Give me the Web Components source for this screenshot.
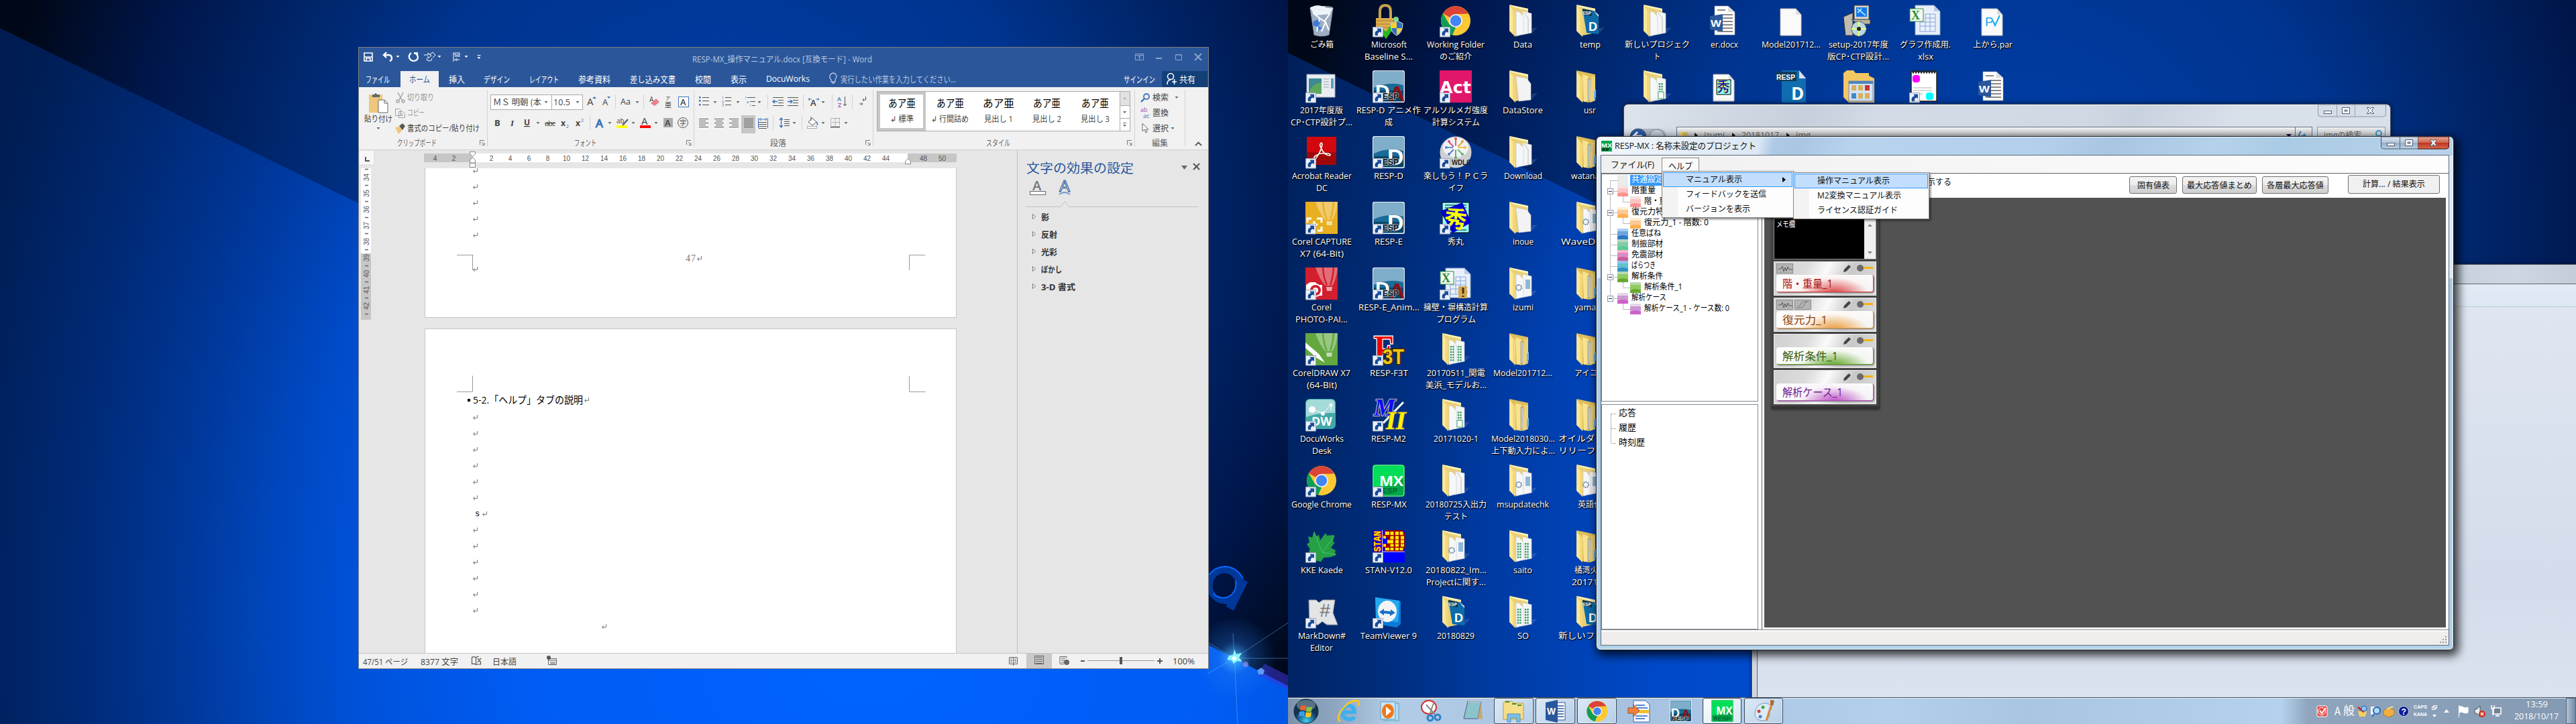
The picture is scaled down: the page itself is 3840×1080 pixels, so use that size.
<!DOCTYPE html>
<html lang="ja">
<head>
<meta charset="utf-8">
<title>Desktop</title>
<style>
html,body{margin:0;padding:0;width:3840px;height:1080px;overflow:hidden;background:#001a50}
body{font-family:"Open Sans","Noto Sans CJK JP",sans-serif;font-size:12px}
</style>
</head>
<body>
<dual-desktop></dual-desktop>
<script>
/* ---------- helpers ---------- */
const BASE = `*{box-sizing:border-box}svg{display:block;flex:none;overflow:visible}.row{display:flex;align-items:center;flex:none}.row>.i{flex:none;display:flex;align-items:center}`;
const S = (x,y,w,h,c,st='') => `<svg width="${w}" height="${h}" viewBox="${x} ${y} ${w} ${h}" style="${st}">${c}</svg>`;
const T = (w,t,st='') => `<fit-text w="${w}" style="${st}">${t}</fit-text>`;
const R = (start,h,items,st='') => { let c=start; return `<div class="row" style="height:${h}px;${st}">`+items.map(([x,w,html,s=''])=>{const m=x-c;c=x+w;return `<div class="i" style="margin-left:${m}px;width:${w}px;${s}">${html}</div>`}).join('')+`</div>`; };
const define = (name, css, html) => customElements.define(name, class extends HTMLElement{
  constructor(){ super(); this.attachShadow({mode:'open'}); }
  connectedCallback(){ if(this.done) return; this.done=true; this.shadowRoot.innerHTML=`<style>${BASE}${css}</style>`+(typeof html==='function'?html(this):html); }
});

/* one line of text condensed or widened to a given width */
customElements.define('fit-text', class extends HTMLElement{
  constructor(){ super(); this.attachShadow({mode:'open'}).innerHTML='<style>:host{display:inline-block;white-space:nowrap;flex:none}span{display:inline-block;transform-origin:0 50%}</style><span><slot></slot></span>'; }
  connectedCallback(){ const w=+this.getAttribute('w'), s=this.shadowRoot.querySelector('span'); this.style.width='auto'; const n=s.getBoundingClientRect().width; this.style.width=w+'px'; if(n>0) s.style.transform=`translateY(var(--dy,-1px)) scaleX(${w/n})`; }
});

/* ---------- wallpaper ---------- */
define('wall-paper', `:host{display:block;width:1920px;height:1080px;overflow:hidden}`, el => {
  const right = el.hasAttribute('plain');
  const edge = right ? 'M0 79L458 303L1840 1000L1920 1040V1080H0Z' : 'M0 42L532 302L1840 982L1920 1023V1080H0Z';
  const stops = (right ? [[0,'#0050e0'],[.45,'#004acc'],[.67,'#0044bc'],[.82,'#003796'],[1,'#002c7c']] : [[0,'#0064ff'],[.35,'#005cf4'],[.6,'#004ccc'],[.78,'#00389e'],[1,'#002468']]).map(([o,c])=>`<stop offset="${o}" stop-color="${c}"/>`).join('');
  return S(0,0,1920,1080,`<defs>
  <radialGradient id="u" gradientUnits="userSpaceOnUse" cx="1080" cy="330" r="1080"><stop offset="0" stop-color="#0040aa"/><stop offset=".45" stop-color="#003490"/><stop offset=".62" stop-color="#00276e"/><stop offset=".82" stop-color="#00164a"/><stop offset="1" stop-color="#000818"/></radialGradient>
  <radialGradient id="l" gradientUnits="userSpaceOnUse" cx="1300" cy="${right?850:930}" r="1500">${stops}</radialGradient>
  <linearGradient id="d" x1="0" x2="1"><stop offset="0" stop-color="#00143a" stop-opacity=".5"/><stop offset=".28" stop-color="#001e50" stop-opacity="0"/></linearGradient>
  <radialGradient id="g"><stop offset="0" stop-color="#7fe8ff"/><stop offset=".12" stop-color="#48b8ff" stop-opacity=".7"/><stop offset=".4" stop-color="#2a80f0" stop-opacity=".3"/><stop offset="1" stop-color="#2a80f0" stop-opacity="0"/></radialGradient></defs>
  <rect width="1920" height="1080" fill="url(#u)"/><path d="${edge}" fill="url(#l)"/><path d="${edge}" fill="url(#d)"/>`+(right?'':`
  <path fill-rule="evenodd" fill="#00389a" d="M1825 845c13 0 24 8 29 20l6 3-21 43-11-6 1-4a28 28 0 1 1-4-56zM1825 855a17.500 18.500 0 1 0 .1 0z"/>
  <path d="M1802 858q8-12 24-13 18 1 27 18M1842 866q2 12-5 20-10 9-22 4-5-2-6-5" fill="none" stroke="#0a66ff" stroke-width="2"/>
  <path d="M1885 990l40 20v20l-51-23z" fill="#3a34d8" opacity=".55"/>
  <circle cx="1840" cy="982" r="62" fill="url(#g)"/><path d="M1770 940L1840 982L1920 929M1838 945L1840 982L1845 1080M1840 982L1800 1005M1840 982h80" fill="none" stroke="#6fc4ff" stroke-opacity=".45"/>
  <path d="M1832 978l6-1 2-8 3 7 8-2-4 7 5 6-8-1-5 4-3-5-7-1z" fill="#8ff6ff"/><circle cx="1840" cy="982" r="3" fill="#fff"/><circle cx="1857" cy="991" r="4" fill="#8f8ff0" opacity=".7"/><path d="M1874 1000l6-4 5 4-2 6h-7z" fill="#5d9cf5"/>`));
});

/* ---------- desktop icon artwork, 48 x 48 ---------- */
const LINK = `<path d="M.5 33.500h15v14.500H.5z" fill="#e9f0fa" stroke="#9aa4b4"/><path d="M4 46q-2-6 4-8l-1.500-2.500H13v6.500l-2-1.500q-4 1-3 5.500z" fill="#1c4c98"/>`;
const FB = `<path d="M36 44l10-10-8 1z" fill="#fff" opacity=".12"/><path d="M4 0l28 6v36l-19 4z" fill="#e9cf78"/><path d="M4 0l28 6v3L8 3z" fill="#fff3b8"/>`;
const FF = `<path d="M4 1l9 11v36L4 39z" fill="#fbe795"/><path d="M4 1l9 11v36L9 43V9z" fill="#f0d273" opacity=".75"/>`;
const PG = (x,c='#f6f7f9') => `<path d="M${x} 10l5 1 6 7v26l-11 3z" fill="${c}" stroke="#c8cbd2" stroke-width=".6"/>`;
const BIG = `<path d="M24 10l13 3v29l-15 3z" fill="#f4f5f7" stroke="#ccc" stroke-width=".6"/>`;
const GRN = x => `<path d="M${x} 19v24M${x+3.500} 19v23" stroke="#3f9f67" stroke-width="2.400" stroke-dasharray="2.500 1.500"/>`;
const A = {
 f2: FB+BIG+PG(14)+`<path d="M26 12l6 8v22" fill="none" stroke="#bbb"/>`+FF,
 f1: FB+`<path d="M14 9l16 3 6 8v24l-18 2z" fill="#f3f3f4" stroke="#ccc" stroke-width=".6"/>`+FF,
 fd: `<path d="M4 0l28 6v36l-10 6-9-2z" fill="#dfbd58"/><path d="M13 6l9 3v37l-7 1z" fill="#f9e28f"/><path d="M21 12l5 2v30l-5 2z" fill="#c7c7b8" stroke="#777" stroke-width=".5"/><path d="M26 8l6 2v35l-8 3z" fill="#ecd27a"/><path d="M33 28v12l-3 5V31z" fill="#6fb5e8"/>`+FF,
 fg: FB+BIG+PG(14)+GRN(17)+GRN(28)+FF,
 fg1: FB+BIG+PG(14)+GRN(28)+`<path d="M26 32h8v10h-8z" fill="#fff" stroke="#3f9f67"/>`+FF,
 fr: FB+`<path d="M13 6l20 4 4 6v28l-18-2z" fill="#0d6ba8"/><path d="M13 6l14 3v8l-14-2z" fill="#123a52"/><path d="M30 10l7 8v-3z" fill="#eee"/><text x="22" y="39" font-size="18" font-weight="700" fill="#fff" font-family="Liberation Sans">D</text><text x="13" y="15" font-size="6.500" font-weight="700" fill="#fff" font-family="Liberation Sans">ESP</text>`+FF,
 fw: FB+BIG+PG(14)+`<circle cx="18" cy="30" r="4" fill="none" stroke="#6a88a8" stroke-width="2" stroke-dasharray="2 1"/><path d="M28 18h7v14h-7z" fill="#8fb8d8"/>`+FF,
 bin: `<path d="M7 5h34l-6 40q-11 4-22 0z" fill="#b9cbe0" opacity=".85"/><path d="M7 5q8-6 17-3t17 3l-5 9-22 2z" fill="#eef4fa"/><path d="M11 12l10 8-4 20M37 12l-8 12 6 14M21 20l9 6-6 14" stroke="#fff" fill="none" stroke-width="2"/><path d="M12 25l6-3 4 6-4 5-7-2zM19 31l6 4-6 4z" fill="#3f78d8"/><path d="M7 5l6 40q11 4 22 0l6-40" fill="none" stroke="#8798ae"/><ellipse cx="24" cy="5" rx="17" ry="2.500" fill="none" stroke="#e8eef6"/>`,
 lock: `<path d="M11 22V10q0-9 8-9t8 9v12" fill="none" stroke="#c9a24a" stroke-width="4"/><path d="M5 20h26v20H5z" fill="#dcae4e"/><path d="M5 24h26M5 29h26M5 34h26" stroke="#a9782a"/><circle cx="35" cy="22" r="4" fill="#7bdc86"/><path d="M14 38l6 8 9-13" stroke="#25b91f" stroke-width="6" fill="none"/><path d="M36 24l9 4q0 14-9 18-9-4-9-18z" fill="#2d6fc4" stroke="#d8e4f0"/><path d="M36 25v10h-8q-1-4 0-7zM36 35h8q-2 7-8 10z" fill="#f7cf33"/>`,
 chrome: `<circle cx="24" cy="24" r="22" fill="#fcc934"/><path d="M24 24L5 13A22 22 0 0 1 43 13.500L24 14z" fill="#db4437"/><path d="M5 13L14.500 29.500 24 34l-5 11.500A22 22 0 0 1 5 13z" fill="#0f9d58"/><circle cx="24" cy="24" r="10" fill="#f1f1f1"/><circle cx="24" cy="24" r="8.200" fill="#4285f4"/>`,
 win: `<path d="M2 6h42v34H2z" fill="#e9edf2" stroke="#a5adb8"/><path d="M5 12h19v23H5z" fill="#3d8a94"/><path d="M5 35Q8 20 24 18v17z" fill="#5da85e"/><path d="M27 13h8M27 17h8M27 21h8M27 25h8" stroke="#b8bdc5" stroke-width="1.500"/><path d="M38 12h4v15h-4z" fill="#5f9fc0"/>`,
 act: `<path d="M0 0h48v48H0z" fill="#e0176a"/><text x="0" y="34" font-size="24" font-weight="700" fill="#fff" font-family="DejaVu Sans" textLength="47" lengthAdjust="spacingAndGlyphs">Act</text>`,
 pdf: `<path d="M2 1h44v42H2z" fill="#d3080c"/><path d="M2 24h44v19H2z" fill="#7d0809" opacity=".6"/><path d="M22 12q2-4 3 0-1 10-10 22-4 1-1-4 8-6 20-4 5 1 2 3-8 0-13-12-2-4-1-5z" fill="none" stroke="#fff" stroke-width="1.700"/>`,
 wdlc: `<circle cx="24" cy="24" r="23.500" fill="#cfcfd1"/><ellipse cx="24" cy="17" rx="19" ry="15" fill="#f2f2f3"/><g fill="none" stroke-width="1.800"><path d="M24 6v10" stroke="#d85848"/><path d="M34 9l-7 7" stroke="#e8a13c"/><path d="M38 17H28" stroke="#f0c234"/><path d="M34 27l-7-7" stroke="#63b26a"/><path d="M24 31V20" stroke="#58a86f"/><path d="M14 27l7-7" stroke="#5679c8"/><path d="M10 17h10" stroke="#5a8ad0"/><path d="M14 9l7 7" stroke="#d0508a"/></g><circle cx="24" cy="4" r="2" fill="#d85848"/><circle cx="34" cy="8" r="2" fill="#e8a13c"/><circle cx="38" cy="17" r="2" fill="#f0c234"/><circle cx="34" cy="27" r="2" fill="#63b26a"/><circle cx="24" cy="32" r="2" fill="#58a86f"/><circle cx="14" cy="27" r="2" fill="#5679c8"/><circle cx="10" cy="17" r="2" fill="#5a8ad0"/><circle cx="14" cy="8" r="2" fill="#d0508a"/><circle cx="24" cy="17.500" r="3" fill="#fff"/><text x="18" y="43" font-size="11" font-weight="700" fill="#222" font-family="Liberation Sans" textLength="29" lengthAdjust="spacingAndGlyphs">WDLC</text>`,
 hide: `<path d="M4 1h40v45H4z" fill="#9ff" stroke="#000"/><path d="M8 5h32M8 9h32M8 13h32M8 42h32" stroke="#000"/><path d="M1 14L34 1l13 30-28 16z" fill="#00c"/><text x="7" y="38" font-size="34" font-weight="700" fill="#ff0" font-family="Noto Sans CJK JP" transform="rotate(8 24 24)">秀</text>`,
 xls: `<path d="M9 1h28l9 9v35H9z" fill="#e8f0fb" stroke="#8ca4c8"/><path d="M37 1v9h9z" fill="#b8cbe8"/><path d="M24 14h15v26H16V26h23M24 20h15M16 32h23M24 14v26M31 14v26" stroke="#88a4d8" fill="none"/><path d="M1 6h20v19H1z" fill="#f4faf2" stroke="#2e8b3e"/><text x="3" y="22" font-size="18" font-weight="700" fill="#2a8a33" font-family="Liberation Serif">X</text>`,
 word: `<path d="M10 2h20l10 9v34H10z" fill="#fff" stroke="#aaa" stroke-width=".6"/><path d="M30 2v9h9z" fill="#ddd"/><path d="M14 8h12M22 15h15M22 20h15M22 25h15M22 30h15M22 35h15M14 40h23" stroke="#888" stroke-width="1.800"/><path d="M3 17l19-3v26L3 37z" fill="#2a579a"/><text x="4" y="33" font-size="15" font-weight="700" fill="#fff" font-family="Liberation Sans" textLength="16" lengthAdjust="spacingAndGlyphs">W</text>`,
 page: `<path d="M8 6h23l8 9v31H8z" fill="#fafafa" stroke="#bbb"/><path d="M31 6v9h8z" fill="#ddd"/>`,
};
A.corel=(c,x)=>`<path d="M0 0h48v48H0z" fill="${c}"/><path d="M15 0q7 20 15 27h10q6-8 8-27z" fill="#fff" opacity=".35"/><path d="M26 0q1 16 6 26M42 0q-1 16-5 26" stroke="${c}" stroke-width="2.500" fill="none"/><path d="M31 29h9l-1 6h-7z" fill="#fff" opacity=".6"/>${x}`;
A.cap=A.corel('#e8b021',`<path d="M3 31v-6h6M17 25h7v6M24 37v6h-6M8 34h10M13 29v10" stroke="#fff" stroke-width="3" fill="none"/>`);
A.pho=A.corel('#d11f2e',`<path d="M1 26l6-4h8l3 4h7v16H1z" fill="#fff"/><circle cx="15" cy="34" r="9" fill="#d11f2e" stroke="#fff" stroke-width="2"/><circle cx="15" cy="34" r="4" fill="#fff"/>`);
A.drw=A.corel('#62a83f',`<path d="M0 14l20 17 9 13-12-7L0 22z" fill="#fff"/>`);
const RESP=(t,e='ESP')=>`<rect x="0" y="0" width="48" height="48" rx="3" fill="#e8eef3"/><rect x="1.500" y="1.500" width="45" height="45" rx="2" fill="#1b6b98"/><path d="M2 2h44v20Q24 16 2 26z" fill="#8fbad2" opacity=".85"/><path d="M2 30h44v16H2z" fill="#084566"/>${t}<text x="15" y="43" font-size="12" font-weight="700" fill="#111" stroke="#b8c8d0" stroke-width="1.400" paint-order="stroke" font-family="Liberation Sans">${e}</text>`;
A.respda=RESP(`<text x="4" y="42" font-size="30" font-weight="700" fill="#fff" font-family="Liberation Sans">D</text><text x="25" y="46" font-size="32" font-weight="700" fill="#900c10" font-family="Liberation Sans">A</text>`);
A.respd=RESP(`<text x="22" y="43" font-size="34" font-weight="700" fill="#fff" font-family="Liberation Sans">D</text>`);
A.mx=`<rect width="48" height="48" rx="4" fill="#00a848"/><path d="M1 4q0-3 3-3h40q3 0 3 3v16Q26 34 1 33z" fill="#00dd58"/><rect x="1" y="1" width="46" height="46" rx="4" fill="none" stroke="#8fe8ac"/><text x="10" y="32" font-size="22" font-weight="700" fill="#fff" font-family="Open Sans" textLength="36" lengthAdjust="spacingAndGlyphs">MX</text><text x="15" y="43" font-size="11" font-weight="700" fill="#063" font-family="Liberation Sans">ESP</text>`;
A.dw=`<rect width="45" height="45" rx="6" fill="#42a8a8"/><path d="M1 7q0-6 6-6h31q6 0 6 6v14Q20 20 1 27z" fill="#a4dad8"/><path d="M10 16l16 5 12-12v8" stroke="#fff" fill="none"/><circle cx="10" cy="16" r="5" fill="#fff"/><circle cx="26" cy="22" r="3" fill="#fff"/><circle cx="38" cy="9" r="2.500" fill="#fff"/><text x="9" y="40" font-size="18" font-weight="700" fill="#fff" font-family="Open Sans">DW</text>`;
A.f3t=`<g paint-order="stroke" font-weight="700"><text x="2" y="43" font-size="58" fill="#f00000" stroke="#fff" stroke-width="3" font-family="Liberation Serif" textLength="30" lengthAdjust="spacingAndGlyphs">F</text><text x="15" y="46" font-size="31" fill="#f0c814" stroke="#4a2800" stroke-width="3" font-family="Liberation Sans" textLength="32" lengthAdjust="spacingAndGlyphs">3T</text></g>`;
A.m2=`<g paint-order="stroke" font-weight="700" font-style="italic" font-family="Liberation Serif"><text x="2" y="25" font-size="36" fill="#0c0cf0" stroke="#a8a8b0" stroke-width="2.500">M</text><path d="M16 36L46 5" stroke="#fff" stroke-width="3"/><text x="20" y="45" font-size="38" fill="#fff000" stroke="#6a6a60" stroke-width="2">II</text></g>`;
A.leaf=`<path d="M13 1l3 8 4-2 2 8 8-11 2 4 11-1-2 10 3 1-6 8 7 4-1 3 2 4-9 3-10 1-4 6-8-2-6-8-4-6 2-3-5-7 4-3-2-9 6 2z" fill="#27a045"/><path d="M13 3l12 30 18-24M25 33l19 3" stroke="#48c468" fill="none"/>`;
A.stan=`<path d="M0 0h48v32H0z" fill="#a00000"/><path d="M0 32h48v16H0z" fill="#00f"/><path d="M15 0h3v6h-3zM15 26h3v6h-3zM15 11h8v9h-8zM45 0h3v3h-3zM45 28h3v4h-3z" fill="#00f"/><g fill="#ffe800"><path d="M19 2h6v5h-6zM26.500 2h5v5h-5zM34 2h5v5h-5zM40.500 2h5v5h-5zM16 8.500h4v4h-4zM26.500 8.500h5v5h-5zM34 8.500h5v5h-5zM42 8.500h5v5h-5zM22 14.500h9v5h-9zM34 14.500h5v5h-5zM42 14.500h5v5h-5zM26.500 20.500h5v4h-5zM34 20.500h5v4h-5zM42 20.500h5v4h-5zM16 20.500h4v4h-4zM19 26h6v4h-6zM26.500 26h5v4h-5zM34 26h5v4h-5zM40.500 26h5v4h-5z"/></g><path d="M0 0h14v32H0z" fill="#00f"/><text transform="translate(11.500 32) rotate(-90)" font-size="14" font-weight="700" fill="#ffe800" stroke="#a00" stroke-width="1.500" paint-order="stroke" font-family="Liberation Mono" textLength="31" lengthAdjust="spacingAndGlyphs">STAN</text><path d="M14 32h34M14.500 0v48" stroke="#dde"/>`;
A.mark=`<path d="M5 6h11l4 4 6-4h18l-3 19 7 18H32l-7-5-6 5H6z" fill="#e2e4e6" stroke="#999"/><text x="21" y="31" font-size="28" fill="#777" font-family="Liberation Sans" font-style="italic">#</text>`;
A.tv=`<path d="M4 2l38 6v34l-6 5L7 42z" fill="#0b7ad8"/><path d="M4 2l36 5-2 32-33-3z" fill="#24a8f0"/><ellipse cx="22" cy="23" rx="14" ry="16" fill="#f2f4f6"/><path d="M10 24l7-5v3l10 1v-3l7 5-8 5v-3l-9-1v3z" fill="#1a6fc8"/>`;
A.xlsm=A.xls+`<path d="M28 28h14q-3 4 0 8-2 4-1 10H27q3-5 0-9 2-4 1-9z" fill="#d2aa55"/><path d="M35 30v9M35 42v2" stroke="#4a3010" stroke-width="3"/>`;
A.setup=`<path d="M18 1h22v22H18z" fill="#d8d4c8" stroke="#444"/><path d="M21 4h16v14H21z" fill="#1478f0"/><path d="M23 6l12 10M23 12l6-6" stroke="#9fe0ff" stroke-width="2"/><path d="M2 18l14-6v34H5z" fill="#c0bcb0" stroke="#333"/><path d="M14 22h28v7H26" fill="#b8b4a8" stroke="#333"/><circle cx="25" cy="36" r="11" fill="#b8d8e0" stroke="#555"/><path d="M25 25v22M14 36h22" stroke="#ef7" stroke-width="2"/><circle cx="25" cy="36" r="3" fill="#222"/>`;
A.par=A.page+`<text x="13" y="32" font-size="19" fill="#18a8f0" font-family="Liberation Sans">P</text><path d="M25 24l3 7 7-15" fill="none" stroke="#18a8f0" stroke-width="2"/>`;
A.hidp=A.page+`<path d="M13 14h21v22H13z" fill="#8ff" stroke="#000"/><text x="13" y="32" font-size="20" font-weight="700" fill="#00c" stroke="#dd0" stroke-width=".6" font-family="Noto Sans CJK JP">秀</text>`;
A.rd=`<path d="M10 0h26l10 11v37H10z" fill="#0f6db0"/><path d="M36 0l10 12H36z" fill="#dde"/><path d="M0 2h32v14H0z" fill="#123c58"/><text x="2" y="13.500" font-size="11" font-weight="700" fill="#fff" font-family="Liberation Sans" textLength="28" lengthAdjust="spacingAndGlyphs">RESP</text><text x="24" y="44" font-size="26" font-weight="700" fill="#fff" font-family="Open Sans">D</text>`;
A.fold=`<path d="M2 4l5-4h10l3 4h20v4l8 4v36H10L2 40z" fill="#f3c862"/><path d="M10 16h36v30H10z" fill="#d3e3f3" stroke="#78a"/><path d="M10 16h36v4H10z" fill="#4a84c0"/><path d="M14 22h7v8h-7zM24 22h7v8h-7zM34 22h7v8h-7zM14 34h7v8h-7zM24 34h7v8h-7zM34 34h7v8h-7z" fill="#d8b060"/><path d="M34 22h7v8h-7z" fill="#c33"/><path d="M14 34h7v8h-7z" fill="#48c"/>`;
A.note=`<path d="M3 2h38v44H3z" fill="#fff" stroke="#222" stroke-width="1.500"/><path d="M5 2h34" stroke="#222" stroke-width="5" stroke-dasharray="2 2"/><rect x="5" y="7" width="11" height="11" rx="4" fill="#f0f"/><path d="M6 26h28M6 30h28M6 35h14" stroke="#ccc" stroke-width="1.500"/><rect x="25" y="33" width="11" height="11" rx="4" fill="#0ff"/>`;

define('desktop-icon', `:host{display:flex;flex-direction:column;align-items:center;width:100px;height:98px;padding-top:7px;color:#fff;font-size:12px;text-shadow:0 1px 2px #000,1px 1px 1px #000;--dy:0px}
 .l{height:18px;line-height:18px;white-space:nowrap}.ls{margin-top:3px;display:flex;flex-direction:column;align-items:center}`,
 el => { const [k,link,...ls]=el.getAttribute('d').split('|');
  return S(0,0,48,48,A[k]+(link==='1'?LINK:''),'text-shadow:none')+`<div class="ls">${ls.map(l=>{const m=l.match(/^(.*)@(\d+)$/);return `<div class="l">${T(m[2],m[1])}</div>`}).join('')}</div>`; });

const ICONS = [
 ['bin|0|ごみ箱@35','win|1|2017年度版@64|CP･CTP設計プ...@92','pdf|1|Acrobat Reader@89|DC@17','cap|1|Corel CAPTURE@89|X7 (64-Bit)@65','pho|1|Corel@30|PHOTO-PAI...@78','drw|1|CorelDRAW X7@86|(64-Bit)@45','dw|1|DocuWorks@65|Desk@29','chrome|1|Google Chrome@90','leaf|1|KKE Kaede@63','mark|1|MarkDown#@71|Editor@34'],
 ['lock|1|Microsoft@53|Baseline S...@72','respda|1|RESP-D アニメ作@96|成@12','respd|1|RESP-D@44','respd|1|RESP-E@42','respda|1|RESP-E_Anim...@91','f3t|1|RESP-F3T@57','m2|1|RESP-M2@52','mx|1|RESP-MX@53','stan|1|STAN-V12.0@70','tv|1|TeamViewer 9@84'],
 ['chrome|1|Working Folder@86|のご紹介@48','act|1|アルソルメガ強度@96|計算システム@71','wdlc|1|楽しもう！ＰＣラ@96|イフ@23','hide|1|秀丸@24','xlsm|1|擁壁・塀構造計算@96|プログラム@59','fg|0|20170511_関電@87|美浜_モデルお...@91','fg1|0|20171020-1@67','f2|0|20180725入出力@91|テスト@35','fw|0|20180822_Im...@91|Projectに関す...@89','fr|0|20180829@56'],
 ['f2|0|Data@28','f1|0|DataStore@60','f2|0|Download@57','f1|0|inoue@31','fw|0|izumi@31','fd|0|Model201712...@88','fd|0|Model2018030...@95|上下動入力によ...@95','fw|0|msupdatechk@78','fg|0|saito@28','fg|0|SO@17'],
 ['fr|0|temp@31','fd|0|usr@18','fd|0|watanabe@57','fw|0|WaveData...@87','fd|0|yamada@47','fd|0|アイコン@46','fd|0|オイルダンパー@95|リリーフ荷重...@95','fw|0|英語化@36','fd|0|橘湾火力@47|2017103@55','fr|0|新しいフォルダ@95'],
 ['f2|0|新しいプロジェク@97|ト@10','fg1|0','','','','','','','',''],
 ['word|0|er.docx@41','hidp|0','','','','','','','',''],
 ['page|0|Model201712...@88','rd|0','','','','','','','',''],
 ['setup|0|setup-2017年度@89|版CP･CTP設計...@92','fold|0','','','','','','','',''],
 ['xls|0|グラフ作成用.@76|xlsx@23','note|1','','','','','','','',''],
 ['par|0|上から.par@59','word|0']
];
define('icon-grid', `:host{display:grid;grid-auto-flow:column;grid-template-rows:repeat(10,98px);grid-auto-columns:100px}`,
 () => ICONS.flat().map(d=>d?`<desktop-icon d="${d}"></desktop-icon>`:'<span></span>').join(''));

/* ---------- Word ---------- */
const dn=(x,y,c='#666')=>`<path d="M${x-2.500} ${y-1}h5l-2.500 3z" fill="${c}"/>`;
const sep=(x,y,h)=>`<path d="M${x}.5 ${y}v${h}" stroke="#d4d4d4"/>`;
const tx=(x,y,s,t,f='#444',e='')=>`<text x="${x}" y="${y}" font-size="${s}" fill="${f}" ${e}>${t}</text>`;
define('word-title', `:host{display:block;background:#2b579a;color:#b9c9e1;font-size:12.500px}`,
 R(535,35,[[535,200,S(535,71,200,35,`<g fill="none" stroke="#fff" stroke-width="1.600"><path d="M543 79h12v12h-12zM543 85h12M546 91v-4h6v4"/><path d="M576 78l-4 4 4 4M572 82h7q5 0 5 5 0 3-3 4" stroke-width="2.400"/><path d="M613 79q-4 3-3 7 2 5 7 5 6-1 6-6-1-5-6-6M617 79h5v5" stroke-width="2.200"/><path d="M632 82h6v-3l5 4-5 4v-3M640 82l5-4 4 4-4 4M636 87a4 4 0 1 0 8 0" stroke-width="1"/><path d="M676 78v14M678 79h7v3h-7zM678 84h8M680 89l-3 0M685 89h-6M681 87l-2 2 2 2" stroke-width="1"/></g>`+dn(593,84,'#fff')+dn(655,84,'#fff')+dn(695,84,'#fff')+dn(714,86,'#fff')+`<path d="M711.500 82.500h5" stroke="#fff"/>`)],
  [1032,268,T(268,'RESP-MX_操作マニュアル.docx&nbsp; [互換モード] - Word')],[1685,115,S(1685,71,115,35,`<g fill="none" stroke="#8ba5cb"><path d="M1692.500 80.500h12v9h-12zM1692 82.500h13M1698.500 89v-5M1696 86l2.500-2.500 2.500 2.500"/><path d="M1723 87h9" stroke-width="2"/><path d="M1752.500 81.500h9v8h-9zM1752 82h10" /><path d="M1781 80l10 10M1791 80l-10 10" stroke-width="2"/></g>`)]]).replace('&nbsp; ',' '));
define('word-tabs', `:host{display:block;background:#2b579a;color:#fff;font-size:13px}`,
 R(535,24,[[545,36,T(36,'ファイル')],[597,57,T(31,'ホーム'),'background:#f1f1f1;color:#2b579a;height:24px;justify-content:center'],[669,24,T(24,'挿入')],[721,39,T(39,'デザイン')],[789,44,T(44,'レイアウト')],[862,48,T(48,'参考資料')],[939,68,T(68,'差し込み文書')],[1036,24,T(24,'校閲')],[1089,24,T(24,'表示')],[1142,65,T(65,'DocuWorks')],
 [1236,14,S(1236,108,14,20,`<path d="M1239 122v-3q-3-3-2-6 2-4 5-4t5 4q0 3-2 6v3zM1240 124h4" fill="none" stroke="#b9c9e1" stroke-width="1.300"/>`)],[1253,172,T(172,'実行したい作業を入力してください...','color:#b9c9e1')],[1675,47,T(47,'サインイン')],
 [1732,68,S(1738,108,18,20,`<circle cx="1745" cy="114" r="4.500" fill="none" stroke="#fff" stroke-width="1.600"/><path d="M1740 126q0-7 5-7M1747 122h7M1750.500 118v8" fill="none" stroke="#fff" stroke-width="1.600"/>`,'margin-left:6px')+T(24,'共有','margin-left:2px'),'background:#124078;height:24px']]));
const launcher=(x)=>S(x,210,8,8,`<path d="M${x+.5} 217v-6.500h6.500M${x+3} 213l4 4M${x+7} 214v3.500h-3.500" fill="none" stroke="#777"/>`);
const lines=(x,y,ws,al='l',c='#555')=>ws.map((w,i)=>{const d=al==='c'?(14-w)/2:al==='r'?14-w:0;return `<path d="M${x+d} ${y+i*3+.5}h${w}" stroke="${c}"/>`}).join('');
const foot=(x0,lx,lw,t,la)=>R(x0,20,[[lx,lw,T(lw,t)],...(la?[[la,8,launcher(la)]]:[])],'margin-top:-1px');
define('word-ribbon', `:host{display:flex;height:94px;background:#f1f1f1;border-bottom:1px solid #d2d0d0;color:#444;font-size:12.500px;padding-top:4px}
 .g{border-right:1px solid #d4d4d4;height:85px;display:flex;flex-direction:column;flex:none}.g>.m{height:70px;flex:none}.g>.row{color:#666}.m{display:flex}.col{display:flex;flex-direction:column}
 .st{display:flex;width:378px;height:60px;margin:2px 0 0 5px;border:1px solid #ababab;background:#fff}.s{width:72px;display:flex;flex-direction:column;align-items:center;justify-content:center;gap:5px;font-size:12px;line-height:20px}.s.on{border:4px solid #c6c6c6}.s b{font:400 16px/20px "Noto Sans CJK JP";color:#000;display:block}
 .sc{width:15px;display:flex;flex-direction:column;margin-left:auto}`, `
 <div class="g" style="width:192px"><div class="m">
  <div class="col" style="width:48px;margin-left:5px;align-items:center">${S(548,137,31,33,`<rect x="549" y="141" width="20" height="27" fill="#eec67c"/><path d="M554 145v-4h3q2-4 4 0h4v4z" fill="#666"/><path d="M563 149h9l5 5v14h-14z" fill="#fff" stroke="#666"/><path d="M572 149v5h5" fill="none" stroke="#666"/>`,'margin-top:3px')}${T(42,'貼り付け','line-height:18px')}${S(560,188,10,6,dn(565,191))}</div>
  <div class="col">
  ${R(588,23,[[590,14,S(589,137,14,16,`<g fill="none" stroke="#a3a3a3" stroke-width="1.500"><path d="M592 137l6 11M600 137l-6 11"/><circle cx="592" cy="150" r="2"/><circle cx="600" cy="150" r="2"/></g>`)],[607,40,T(40,'切り取り','color:#999')]])}
  ${R(588,23,[[588,16,S(587,160,16,16,`<path d="M588.500 161.500h6l2 2v8h-8zM593.500 165.500h6l3 3v6h-9zM595 169h5M595 171.500h5" fill="#f1f1f1" stroke="#a3a3a3"/>`)],[607,26,T(26,'コピー','color:#999')]])}
  ${R(588,23,[[588,16,S(587,182,16,18,`<path d="M588 189l6-1 5 5-6 6z" fill="#eec67c"/><path d="M594 187l5-4 4 4-4 6z" fill="#555"/>`)],[607,108,T(108,'書式のコピー/貼り付け','color:#444')]])}
  </div></div>${foot(535,592,59,'クリップボード',715)}</div>
 <div class="g" style="width:308px"><div class="m">${S(727,134,306,70,`<g font-family="Open Sans"><rect x="731.5" y="141.500" width="91" height="22" fill="#fff" stroke="#ababab"/><rect x="822.5" y="141.500" width="46" height="22" fill="#fff" stroke="#ababab"/>${tx(735,157,12.500,'ＭＳ 明朝 (本','#444','font-family="Noto Sans CJK JP" textLength="72" lengthAdjust="spacingAndGlyphs"')}${tx(825,157,12.500,'10.5','#444','textLength="25"')}
 ${dn(814,152)+dn(861,152)+sep(917,141,22)+sep(959,141,22)+sep(879,172,22)}
 ${tx(875,157,15,'A')}<path d="M883 147l3-3 3 3z" fill="#3b74b5"/>${tx(898,157,13,'A')}<path d="M905 144h5l-2.500 3z" fill="#3b74b5"/>${tx(925,156,12.500,'Aa')}${dn(950,152)}
 ${tx(968,152,10,'A')}<path d="M970 154l8-7 5 5-7 6z" fill="#e8808c"/>${tx(992,149,7,'ア','#444','font-family="Noto Sans CJK JP"')}${tx(991,160,10,'亜','#444','font-family="Noto Sans CJK JP"')}<rect x="1011.500" y="144.500" width="15" height="15" fill="#fff" stroke="#3b74b5"/>${tx(1014,157,13,'A','#444','font-weight="600"')}
 ${tx(737,188,13,'B','#444','font-weight="700"')}${tx(761,188,13,'I','#444','font-style="italic" font-family="Liberation Serif" font-weight="700"')}${tx(781,187,12,'U','#444','font-weight="700" text-decoration="underline"')}${dn(802,183)}${tx(812,188,11,'abc','#444','text-decoration="line-through" textLength="16"')}
 ${tx(836,188,12,'x','#444','font-weight="700"')}${tx(844,191,7,'2','#3b74b5')}${tx(858,188,12,'x','#444','font-weight="700"')}${tx(866,182,7,'2','#3b74b5')}
 ${tx(888,190,17,'A','#fff','stroke="#3b74b5" stroke-width="1.200"')}${dn(909,183)}${tx(919,184,10,'ab')}<path d="M928 187l8-9" stroke="#666" stroke-width="2.500"/><rect x="919" y="187" width="16" height="4" fill="#ff0"/>${dn(944,183)}${tx(956,186,15,'A')}<rect x="954" y="187" width="16" height="4" fill="#f00"/>${dn(978,183)}<rect x="989" y="176" width="14" height="14" fill="#ababab"/>${tx(991,188,13,'A','#444','font-weight="600"')}<circle cx="1018" cy="183" r="7.500" fill="none" stroke="#555"/>${tx(1013,187,10,'字','#444','font-family="Noto Sans CJK JP"')}</g>`)}</div>${foot(727,856,33,'フォント',1023)}</div>
 <div class="g" style="width:267px"><div class="m">${S(1035,134,266,70,`<g font-family="Open Sans">
 ${[0,5,11].map(d=>`<rect x="1042" y="${144+d}" width="2.500" height="2.500" fill="#3b74b5"/><path d="M1047 ${145.500+d}h10M1081 ${145.500+d}h9" stroke="#555"/>`).join('')}${dn(1066,152)}${tx(1076,148,5.500,'1','#3b74b5')+tx(1076,153.500,5.500,'2','#3b74b5')+tx(1076,159,5.500,'3','#3b74b5')}${dn(1100,152)}
 ${tx(1110,148,5.500,'1','#3b74b5')+tx(1113,154,6,'a','#3b74b5')+tx(1118,159,6,'i','#3b74b5')}<path d="M1114 145.500h12M1118 151.500h8M1121 157.500h5" stroke="#555"/>${dn(1132,152)}${sep(1144,141,22)}
 ${[0,4,8,12].map(d=>`<path d="M${d%12?1160:1152} ${145.500+d}H1168M${d%12?1182:1174} ${145.500+d}h${d%12?8:16}" stroke="#555"/>`).join('')}<path d="M1152 151.500h7M1155 149l-3 2.500 3 2.500M1174 151.500h7M1178 149l3 2.500-3 2.500" stroke="#3b74b5" stroke-width="1.500" fill="none"/>
 ${sep(1197,141,22)}${tx(1208,158,13,'A','#444','font-weight="600"')}<path d="M1205 148h5M1221 148h-5M1207 146l-2 2 2 2M1219 146l2 2-2 2" stroke="#3b74b5" fill="none"/>${dn(1227,152)}${sep(1240,141,22)}${tx(1248,151,9,'A','#3b74b5','font-weight="600"')}${tx(1249,160,9,'Z','#8e55b5','font-weight="600"')}<path d="M1259.500 144v14M1257 155l2.500 3 2.500-3" stroke="#555" fill="none"/>${sep(1270,141,22)}<path d="M1290.500 144v5h-4M1288 147l-2 2 2 2M1281 155h5M1284 153l2 2-2 2" stroke="#555" fill="none"/>
 <rect x="1105" y="172" width="21" height="27" fill="#c6c6c6"/>${lines(1042,177,[14,10,14,10,14])+lines(1065,177,[14,10,14,10,14],'c')+lines(1087,177,[14,10,14,10,14],'r')+lines(1109,177,[14,14,14,14,14])+lines(1131,182,[12,12,12,12])}<path d="M1130.500 176v15M1144.500 176v15M1132 178h11M1134 176l-2 2 2 2M1141 176l2 2-2 2" stroke="#3b74b5" fill="none"/>${sep(1152,172,22)}
 <path d="M1164.500 176v14M1162 179l2.500-3 2.500 3M1162 187l2.500 3 2.500-3" stroke="#3b74b5" fill="none" stroke-width="1.300"/>${lines(1169,178,[8,8,8,8])}${dn(1184,183)}${sep(1195,172,22)}<path d="M1205 182l6-6 6 6-6 5zM1209 174v6" fill="#fff" stroke="#555"/><path d="M1217 181q4 3 1 7z" fill="#3b74b5"/><rect x="1203.500" y="188.500" width="14" height="3" fill="#fff" stroke="#aaa"/>${dn(1227,183)}<path d="M1238.500 176v12M1251.500 176v12M1238 176.500h14M1238 182.500h14M1245 176v12" stroke="#777" stroke-dasharray="1 1"/><path d="M1238 189.500h14" stroke="#444" stroke-width="1.500"/>${dn(1261,183)}</g>`)}</div>${foot(1035,1148,24,'段落',1290)}</div>
 <div class="g" style="width:390px"><div class="m"><div class="st"><div class="s on"><b>${T(41,'あア亜')}</b>${T(35,'↲ 標準')}</div><div class="s"><b>${T(41,'あア亜')}</b>${T(56,'↲ 行間詰め')}</div><div class="s"><b>${T(47,'あア亜')}</b>${T(43,'見出し 1')}</div><div class="s"><b>${T(41,'あア亜')}</b>${T(43,'見出し 2')}</div><div class="s"><b>${T(41,'あア亜')}</b>${T(43,'見出し 3')}</div>
 <div class="sc">${S(0,0,15,58,`<rect width="15" height="20" fill="#e1e1e1"/><path d="M.5 0v58M0 20.500h15M0 39.500h15" stroke="#ababab" fill="none"/><path d="M5 11h5l-2.500-3z" fill="#aaa"/>${dn(7.500,30)+dn(7.500,50)}<path d="M5 46.500h5" stroke="#666"/>`)}</div></div></div>${foot(1302,1470,36,'スタイル',1680)}</div>
 <div class="g" style="width:75px"><div class="m col">
 ${R(1692,23,[[1700,15,S(1700,137,15,16,`<circle cx="1709" cy="143" r="4" fill="none" stroke="#3b74b5" stroke-width="1.800"/><path d="M1706 146l-5 5" stroke="#3b74b5" stroke-width="2.400"/>`)],[1718,24,T(24,'検索')],[1750,8,S(1750,141,8,8,dn(1754,144))]])}
 ${R(1692,23,[[1699,17,S(1699,159,17,18,tx(1700,166,9,'ab','#8e55b5')+tx(1704,175,9,'ac','#3b74b5'))],[1718,24,T(24,'置換')]])}
 ${R(1692,23,[[1702,12,S(1702,182,12,18,`<path d="M1703 183v12l3-3 2 5 2-1-2-4h4z" fill="#fff" stroke="#666"/>`)],[1718,24,T(24,'選択')],[1744,8,S(1744,186,8,8,dn(1748,189))]])}
 </div>${foot(1692,1717,24,'編集')}</div>
 ${S(1767,134,33,85,`<path d="M1782 217l4.500-4.500 4.500 4.500" fill="none" stroke="#555" stroke-width="1.800"/>`)}`);

const RET = S(0,0,9,9,`<path d="M7.500 0v4.500H1.500M4 2L1.500 4.500 4 7" fill="none" stroke="#7a7a7a"/>`);
const MK = (x,n='',st='')=>R(634,24,[...(n?[[708,6,n]]:[]),[x,9,RET]],st);
define('word-document', `:host{display:flex;flex-direction:column;width:981px;background:#e6e6e6;overflow:hidden}
 .b{display:flex;flex:1;overflow:hidden}.ps{display:flex;flex-direction:column;gap:16px;width:793px}.p{background:#fff;border:1px solid #c6c6c6;overflow:hidden;flex:none;font-size:15px;color:#000}.p1{height:223px;border-top:0}.p2{height:490px}`, () => {
 let n='', m='';
 for(let v=4;v>0;v-=2) n+=tx(704.500-14*v,239.500,10,v,'#555','text-anchor="middle"');
 for(let v=2;v<=50;v+=2) if(v!==46) n+=tx(704.500+14*v,239.500,10,v,'#555','text-anchor="middle"');
 for(let v=34;v<=42;v++){const y=264.500+24*(v-34); m+=`<text transform="translate(550 ${y}) rotate(-90)" font-size="10" fill="#555" text-anchor="middle">${v}</text><path d="M544 ${y-12}h5" stroke="#666" stroke-width="1.500"/>`;}
 m+=`<path d="M544 468.500h5" stroke="#666" stroke-width="1.500"/>`;
 return S(535,224,981,27,`<g font-family="Liberation Sans"><rect x="535" y="224" width="23" height="22" fill="#f7f7f7" stroke="#d8d8d8"/><path d="M545 234v6h6" fill="none" stroke="#555" stroke-width="2"/><rect x="632" y="229" width="794" height="13" fill="#fff"/><rect x="632" y="229" width="73" height="13" fill="#c6c6c6"/><rect x="1353" y="229" width="73" height="13" fill="#c6c6c6"/>${n}<path d="M700.500 226.500h8v3l-4 4-4-4zM700.500 243v-4l4-4 4 4v4zM700.500 243.500h8v6h-8zM1349.500 244.500v-4l4-4 4 4v4z" fill="#fff" stroke="#888"/></g>`)+
 `<div class="b">${S(535,251,98,724,`<g font-family="Liberation Sans"><rect x="538" y="251" width="15" height="127" fill="#fff"/><rect x="538" y="378" width="15" height="99" fill="#c6c6c6"/>${m}</g>`)}
 <div class="ps"><div class="p p1">${MK(704,'','margin-top:-8px')}${MK(704).repeat(4)}
 ${S(634,363,790,110,`<path d="M681 380.500h24.500M704.500 380v23M1355.500 403v-22.500h24" fill="none" stroke="#9a9a9a"/><text x="1022" y="390" font-size="14" fill="#777" font-family="Liberation Serif" textLength="15">47</text><path d="M1045.500 382v4.500h-6M1042 384l-2.500 2.500 2.500 2.500M711.500 398v4.500h-6M708 400l-2.500 2.500 2.500 2.500" fill="none" stroke="#7a7a7a"/>`)}</div>
 <div class="p p2">${S(634,491,790,94,`<path d="M681 584.500h23.500v-24M1355.500 561v23.500h24" fill="none" stroke="#9a9a9a"/>`)}
 ${R(634,24,[[697,4,S(0,0,4,4,'<rect width="4" height="4"/>')],[705,164,T(164,'5-2.「ヘルプ」タブの説明','--dy:-2px')],[870,9,RET]])}
 ${MK(704,'','margin-top:2px')}${MK(704).repeat(5)}${MK(718,'<span style="font:12px Liberation Mono">s</span>')}${MK(704).repeat(6)}${MK(896)}</div></div></div>`; });
define('effects-pane', `:host{display:flex;flex-direction:column;width:285px;background:#e6e6e6;border-left:1px solid #bcbcbc;color:#333;font-size:12.500px;padding-top:13px}`,
 R(1517,30,[[1530,160,T(160,'文字の効果の設定','font-size:19px;color:#2b579a;line-height:30px')],[1760,35,S(1760,240,35,20,`<path d="M1761 245h9l-4.500 6z" fill="#666"/><path d="M1779 242l9 9M1788 242l-9 9" stroke="#555" stroke-width="2"/>`)]])+
 S(1517,267,283,43,`<g font-family="Open Sans">${tx(1539,284,20,'A','#777','font-weight="600"')}<rect x="1535.500" y="285.500" width="23" height="5" fill="#fff" stroke="#666"/>${tx(1579,286,23,'A','#fff','stroke="#2b579a" textLength="16" lengthAdjust="spacingAndGlyphs"')}<path d="M1579 289q8-6 16 0v2q-8-6-16 0z" fill="#6e94cc"/></g><path d="M1530 308.500h51l6.500-8 6.500 8h193" fill="none" stroke="#c2c2c2"/>`)+
 [['影',12],['反射',24],['光彩',24],['ぼかし',31],['3-D 書式',51]].map(([t,w])=>R(1517,26,[[1539,6,S(0,0,6,9,'<path d="M.5.5v7l4-3.500z" fill="#fff" stroke="#777"/>')],[1552,w,T(w,t,'font-weight:700;--dy:0px')]])).join(''));
define('word-status', `:host{display:block;background:#f1f1f1;border-top:1px solid #c6c6c6;color:#444;font-size:12.500px;--dy:0px}`,
 R(535,22,[[541,67,T(67,'47/51 ページ')],[627,56,T(56,'8377 文字')],[702,17,S(702,978,17,16,`<path d="M703.500 980.500q4-2 6 1v10q-3-2-6-1zM709.500 981q2-2 4-1.500M709.500 991h7v-3M712 982l5 6M717 982l-5 6" fill="none" stroke="#555" stroke-width="1.200"/>`)],[734,36,T(36,'日本語')],[815,16,S(815,978,16,16,`<path d="M817.500 982.500h12v9h-12zM817 985h13M820 988h8M820 990h8" fill="none" stroke="#666"/><circle cx="818" cy="981" r="3" fill="#555"/>`)],
 [1502,16,S(1502,978,16,16,`<path d="M1504.500 980.500h12v10h-12zM1510.500 981v12M1506 983h3M1506 985.500h3M1506 988h3M1512 983h3M1512 985.500h3M1512 988h3" fill="none" stroke="#666"/>`)],[1530,38,S(1530,976,38,22,`<rect x="1542.500" y="979.500" width="13" height="12" fill="none" stroke="#666"/>`+lines(1544,981,[10,10,10,10],'l','#666')),'background:#c9c9c9;height:22px'],
 [1578,18,S(1578,978,18,16,`<path d="M1590 982v-2.500h-10v11h6M1582 982h6M1582 985h5M1582 988h4" fill="none" stroke="#666"/><circle cx="1590" cy="988" r="4" fill="#666"/>`)],[1608,130,S(1608,978,130,16,`<path d="M1611 986h6M1725 986h8M1729 982v8" stroke="#555" stroke-width="2"/><path d="M1621 985.500h100" stroke="#999"/><rect x="1669" y="980" width="4" height="11" fill="#555"/>`)],[1748,33,T(33,'100%')]]));
define('word-window', `:host{display:flex;flex-direction:column;width:1268px;height:928px;border:1px solid #7d7d7d;background:#e6e6e6}.m{display:flex;flex:1;min-height:0}`,
 `<word-title></word-title><word-tabs></word-tabs><word-ribbon></word-ribbon><div class="m"><word-document></word-document><effects-pane></effects-pane></div><word-status></word-status>`);

/* ---------- Aero windows ---------- */
const GLASS='linear-gradient(115deg,#d3e2f2 0,#b9d1ea 12%,#a9c6e3 24%,#b7d3ee 30%,#b3cfec 52%,#a8c5e2 60%,#b5d2ec 72%,#aacbe5 80%,#bad2ea 100%)';
define('caption-buttons', `:host{display:block}`, el => { const a=el.hasAttribute('active');
 return S(0,0,102,19,`<defs><linearGradient id="r" x2="0" y2="1"><stop offset="0" stop-color="#e8a898"/><stop offset=".48" stop-color="#d0644e"/><stop offset=".5" stop-color="#bb3420"/><stop offset="1" stop-color="#dc6a4c"/></linearGradient><linearGradient id="b" x2="0" y2="1"><stop offset="0" stop-color="#d7e3f0"/><stop offset=".48" stop-color="#b4c6da"/><stop offset=".5" stop-color="#95acc6"/><stop offset="1" stop-color="#b9d2e8"/></linearGradient></defs>
 <path d="M.5 0v14q0 4 4 4h93q4 0 4-4V0z" fill="${a?'url(#b)':'#d5dee8'}" stroke="${a?'#4a5666':'#8e98a6'}"/>${a?'<path d="M55.500 0v18h42q4 0 4-4V0z" fill="url(#r)" stroke="#4e1d16"/>':''}<path d="M28.500 0v18M55.500 0v18" stroke="${a?'#5a6676':'#9aa4b2'}"/>
 <g fill="#fff" stroke="#525c6e"><rect x="9.500" y="9.500" width="11" height="4"/><path fill-rule="evenodd" d="M36.500 4.500h11v9h-11zM40 8h4v2h-4z"/><path d="M73.500 4.500h3.500l1.500 2 1.500-2h3.500L80.500 9l3 4.500H80l-1.500-2.500L77 13.500h-3.500l3-4.500z"/></g>`); });
const CH='<path d="M0 0l5 4-5 4z" fill="#111"/>';
define('folder-window', `:host{display:block;width:1144px;height:300px;border:1px solid #4a525e;border-radius:7px 7px 0 0;background:linear-gradient(115deg,#dde4ec 0,#ccd5e0 16%,#c5d0dc 22%,#d2dbe6 30%,#cfd9e4 55%,#c8d2de 60%,#d8e0ea 72%);box-shadow:inset 0 1px #f6f8fa,0 0 8px rgba(0,0,0,.6);color:#666;font-size:12px}`,
 R(2421,31,[[3455,102,'<caption-buttons></caption-buttons>','align-self:flex-start']])+
 R(2421,24,[[2428,65,S(2428,187,65,24,`<rect x="2430" y="189" width="54" height="26" rx="12" fill="#aeb8c4"/><circle cx="2442" cy="201" r="12" fill="#2c5ba8" stroke="#456"/><path d="M2436 200h12M2441 194l-6 6 6 6" stroke="#fff" stroke-width="3" fill="none"/><circle cx="2470" cy="201" r="11" fill="#c8d2dc" stroke="#889"/><path d="M2487 200h8l-4 4z" fill="#245a80"/>`)],
 [2499,923,R(2500,22,[[2503,13,S(0,0,13,16,'<path d="M0 1l5 2v13l-5-3z" fill="#f5dd84"/><path d="M5 3h8v13H5z" fill="#e0c060"/>')],[2526,5,S(0,0,5,8,CH)],[2540,31,T(31,'izumi')],[2582,5,S(0,0,5,8,CH)],[2596,56,T(56,'20181017')],[2663,5,S(0,0,5,8,CH)],[2677,22,T(22,'img')],[3408,8,S(0,0,8,6,'<path d="M0 1h8l-4 5z" fill="#114"/>')]],'width:100%'),'border:1px solid #6c7480;background:linear-gradient(#f3f4f5,#c8cacc 55%);height:26px'],
 [3422,25,S(0,0,20,16,'<path d="M8 2q-5 5-1 9M4 8l3 4 3-4M13 12V7l-2 2M13 7l3 3" stroke="#3a86b8" stroke-width="2" fill="none"/>'),'border:1px solid #6c7480;border-left:0;background:linear-gradient(#f3f4f5,#c8cacc 55%);height:26px'],
 [3454,102,T(56,'imgの検索','margin-left:9px')+S(0,0,14,16,'<circle cx="8" cy="5" r="4" fill="none" stroke="#3a9ad0" stroke-width="2"/>','margin-left:18px'),'border:1px solid #8e98a6;background:linear-gradient(#eceef0,#d0d3d6 55%);height:26px']],'margin-top:3px'));
define('back-window', `:host{display:flex;flex-direction:column;width:1240px;height:660px;border:1px solid #525a66;background:#cdd6e2;padding-left:7px;box-shadow:inset 0 1px #eef2f6,inset 1px 0 #eef2f6,0 0 6px rgba(0,0,0,.5)}
 .t{height:28px;background:linear-gradient(90deg,#c8d2de 85%,#cdd7e3 92%,#c2ccd8)}.a{height:35px;border:1px solid #5f6874;border-bottom-color:#c0ccda;background:linear-gradient(#e2eaf5,#dce7f4)}.c{flex:1;border-left:1px solid #5f6874;background:linear-gradient(#dfe6f1,#d3dceb 70%,#dae3ef)}`, `<div class="t"></div><div class="a"></div><div class="c"></div>`);

/* ---------- RESP-MX ---------- */
const TI=(a,b,c)=>`<rect width="16" height="16" fill="${a}"/><rect y="4" width="16" height="12" fill="${b}"/><path d="M0 16v-4q4-2 8-2t8 2v4z" fill="${c}"/>`;
const TREE=[[0,'#ebebeb,#ebebeb,#ebebeb','共通設定',48,0,1],[0,'#f0e4e2,#fcc4c4,#ff9090','階重量',36,1],[1,'#f0e4e2,#fcc4c4,#ff9090','階・重量_1',56],[0,'#fdf0d0,#fdc995,#ffb050','復元力特性',60,1],[1,'#fdf0d0,#fdc995,#ffb050','復元力_1 - 階数: 0',96],[0,'#a8ccf4,#6ea4dc,#2878c8','任意ばね',44],[0,'#b4d8c0,#84cca8,#58cc94','制振部材',47],[0,'#fdb4cc,#dc8cc4,#cc5c9c','免震部材',47],[0,'#90c4f0,#60c0cc,#3090c8','ばらつき',36],[0,'#b8d8b0,#90cc60,#68a830','解析条件',47,1],[1,'#b8d8b0,#90cc60,#68a830','解析条件_1',57],[0,'#e4d8e8,#cc98d0,#cc60cc','解析ケース',52,1],[1,'#e4d8e8,#cc98d0,#cc60cc','解析ケース_1 - ケース数: 0',127]];
define('project-tree', `:host{display:flex;flex-direction:column;background:#fff;border:1px solid #828790;height:340px;padding-top:1px;color:#000;font-size:12px;line-height:16px}`,
 TREE.map(([lv,c,t,w,ex,sel],i)=>{ const x=lv?2430:2411; const last=i>=11;
  const g=S(2389,0,x-2389,16,`<path d="M2400.500 ${i?0:8}V${last?(i===11?8:0):16}${lv?`M2419.500 0V8M2419 8.500H2430`:`M2400 8.500H2411`}" stroke="#777" stroke-dasharray="1 1" fill="none"/>${ex?`<rect x="2396.500" y="4.500" width="8" height="8" fill="#fff" stroke="#8a94a0"/><path d="M2398 8.500h5" stroke="#225"/>`:''}`);
  return R(2388,16,[[2389,x-2389,g],[x,16,S(0,0,16,16,TI(...c.split(',')))],[lv?2449:2430,w+4,T(w,t,'margin-left:2px'),sel?'background:#39f;color:#fff':'']]);}).join(''));
define('result-tree', `:host{display:flex;flex-direction:column;background:#fff;border:1px solid #828790;height:337px;color:#000;font-size:13px;padding-top:1px}`,
 [['応答',26],['履歴',26],['時刻歴',39]].map(([t,w],i)=>R(2388,22,[[2395,14,S(2395,0,14,22,`<path d="M2401.500 ${i?0:12}V${i===2?12:22}M2402 12.500h8" stroke="#777" stroke-dasharray="1 1"/>`)],[2413,w,T(w,t)]])).join(''));
define('case-card', `:host{display:flex;flex-direction:column;width:153px;height:51px;border:1px solid #eee;background:linear-gradient(115deg,#d0d0d0 0,#dcdcdc 30%,#fafafa 48%,#c8c8c8 70%,#dedede);padding:1px 3px}
 .pill{height:26px;border-radius:4px;border:1px solid #fff;border-right-color:var(--c);border-bottom-color:var(--c);box-shadow:1px 1px 2px #777;background:radial-gradient(ellipse 50px 24px at 60% 115%,var(--c),transparent),linear-gradient(rgba(255,255,255,.75),rgba(255,255,255,.35)),linear-gradient(90deg,#fff,var(--p) 50%,#eee);display:flex;align-items:center;padding-left:8px;font-size:16px;color:var(--t)}`,
 el => { const n=+el.getAttribute('n'); const g=x=>`<rect x="${x}.5" y="1.500" width="24" height="14" fill="#b4b4b4" stroke="#8a8a8a"/>`;
 return S(0,0,145,18,(n>0?g(0)+'<path d="M3 9h4l2-4 2 8 2-6 2 5 2-6 2 4h5" fill="none" stroke="#555"/>':'')+(n>1?g(27)+'<path d="M30 13q4 0 6-5t12-4M34 13q6 0 8-5t4-4" fill="none" stroke="#777"/>':'')+`<path d="M101 10l7-7 3 3-7 7-4 1z" fill="#444"/><path d="M125 7.500h19" stroke="#f2b414" stroke-width="3"/><circle cx="125" cy="8" r="5" fill="#6a6a6a"/>`)+
 `<div class="pill">${T(el.getAttribute('w'),el.getAttribute('t'))}</div>`; });
define('drop-menu', `:host{display:block;border:1px solid #888;background:linear-gradient(90deg,#f3f3f3 23px,#fdfdfd 23px);padding:1px;box-shadow:2px 2px 3px rgba(0,0,0,.5);color:#111;font-size:12.500px;--dy:-2px}
 .it{height:22px;display:flex;align-items:center;padding-left:34px}.on{border:1px solid #39f;background:#c2defd;padding-left:33px}.ar{margin-left:auto;margin-right:9px}`,
 el => el.getAttribute('d').split('|').map((s,i)=>{const [t,w]=s.split('@');return `<div class="it ${i?'':'on'}">${T(w,t)}${!i&&el.hasAttribute('sub')?S(0,0,5,8,'<path d="M0 0l5 4-5 4z"/>').replace('<svg','<svg class="ar"'):''}</div>`}).join(''));
define('resp-window', `:host{display:block;position:relative;width:1279px;height:767px;border:1px solid #1c242e;border-radius:7px;background:linear-gradient(100deg,rgba(255,255,255,.7) 0,rgba(255,255,255,.55) 240px,transparent 262px) 0 0/100% 28px no-repeat,${GLASS} 0 0/100% 28px no-repeat,linear-gradient(#dce9f6 0,#dce9f6 210px,#a9c8e4 212px,#b3d2ea);box-shadow:inset 0 0 0 1px #f2f7fc,4px 5px 14px 3px rgba(0,0,0,.75);font-size:13px;color:#111;--dy:-1.500px}
 .cl{margin:0 6px;width:1265px;height:732px;border:1px solid #5d6b7a;background:#fff;display:flex;flex-direction:column}
 .mb{background:linear-gradient(90deg,#f0f0f0,#fdfdfd)}
 .bd{display:flex;height:681px;border-top:1px solid #646464}.lf{width:234px;display:flex;flex-direction:column;gap:4px}.rt{margin-left:5px;border-left:1px solid #646464;flex:1;display:flex;flex-direction:column;border-right:0}
 .btn{height:26px;border:1px solid #707070;border-radius:3px;background:linear-gradient(#f4f4f4,#ececec 48%,#dcdcdc 52%,#cfcfcf);justify-content:center;font-size:12.500px}
 .cv{margin:0 4px 3px 3px;height:641px;background:#525252}
 .pn{margin-left:10px;width:161px;height:315px;background:#444;border-bottom:4px solid #333;padding:30px 4px 0;display:flex;flex-direction:column;gap:3px;box-shadow:1px 1px 3px #222}
 .mm{height:62px;display:flex;background:#000;border:1px solid #888;color:#fff;font-size:12px;line-height:20px;padding-left:3px;justify-content:space-between}
 .sb{height:21px;margin-top:2px;background:#f0edec;display:flex;justify-content:flex-end;align-items:flex-end}
 .m1,.m2{position:absolute}.m1{left:97px;top:51px;width:197px;height:70px}.m2{left:293px;top:53px;width:203px;height:70px}`, `
 ${R(2380,27,[[2387,16,S(0,0,16,16,'<rect width="16" height="16" fill="#00a54a"/><text x="0" y="10" font-size="9" font-weight="700" fill="#fff" textLength="16" lengthAdjust="spacingAndGlyphs" font-family="Liberation Sans">MX</text><text x="1" y="15" font-size="4.500" font-weight="700" textLength="11" font-family="Liberation Sans">RESP</text>')],[2407,211,T(211,'RESP-MX : 名称未設定のプロジェクト')],[3549,102,'<caption-buttons active></caption-buttons>','align-self:flex-start']])}
 <div class="cl"><div class="mb">${R(2387,26,[[2401,65,T(65,'ファイル(F)')],[2477,56,T(36,'ヘルプ'),'border:1px solid #888;border-bottom:0;height:23px;background:#fafafa;justify-content:center;align-self:flex-end']])}</div>
 <div class="bd"><div class="lf"><project-tree></project-tree><result-tree></result-tree></div>
 <div class="rt">${R(2627,36,[[2861,48,T(48,'表示する','font-size:12px;margin-top:-8px')],[3174,71,`<div class="row btn" style="width:71px">${T(48,'固有値表')}</div>`],[3253,111,`<div class="row btn" style="width:111px">${T(97,'最大応答値まとめ')}</div>`],[3372,99,`<div class="row btn" style="width:99px">${T(85,'各層最大応答値')}</div>`],[3500,137,`<div class="row btn" style="width:137px;height:28px;background:#f0f0f0;margin-top:-3px">${T(93,'計算... / 結果表示')}</div>`]],'margin-top:-1px;margin-bottom:1px')}
 <div class="cv"><div class="pn"><div class="mm"><span>${T(28,'メモ欄')}</span>${S(0,0,17,60,'<rect width="17" height="60" fill="#f0f0f0"/><path d="M5 12h7l-3.500-4zM5 49h7l-3.500 4z" fill="#888"/>')}</div>
 <case-card n="1" t="階・重量_1" w="75" style="--c:#d83c3c;--p:#f8d4d4;--t:#a81010"></case-card><case-card n="2" t="復元力_1" w="67" style="--c:#e89838;--p:#f8e8d4;--t:#8c4008"></case-card><case-card n="0" t="解析条件_1" w="83" style="--c:#5ca020;--p:#dcecd0;--t:#3c5c10"></case-card><case-card n="0" t="解析ケース_1" w="90" style="--c:#b848c0;--p:#ecd4ee;--t:#6c1c90"></case-card></div></div></div></div>
 <div style="height:1px;background:#828790;flex:none"></div><div class="sb">${S(0,0,14,14,'<path d="M9 1h2v2H9zM5 5h2v2H5zM9 5h2v2H9zM1 9h2v2H1zM5 9h2v2H5zM9 9h2v2H9z" fill="#999"/>')}</div></div>
 <drop-menu class="m1" sub d="マニュアル表示@84|フィードバックを送信@120|バージョンを表示@96"></drop-menu><drop-menu class="m2" d="操作マニュアル表示@108|M2変換マニュアル表示@125|ライセンス認証ガイド@120"></drop-menu>`);

/* ---------- taskbar ---------- */
const sc=(k,s=34)=>`<svg width="${s}" height="${s}" viewBox="0 0 48 48">${A[k]}</svg>`;
A.dat=RESP('','')+`<text x="3" y="38" font-size="26" font-weight="700" fill="#fff" font-family="Liberation Sans">D</text><text x="25" y="40" font-size="28" font-weight="700" fill="#900c10" font-family="Liberation Sans">A</text><text x="4" y="45" font-size="14" font-weight="700" fill="#111" stroke="#dfe6ea" stroke-width="1.500" paint-order="stroke" font-family="Liberation Sans">RESP</text>`;
A.mxt=A.mx.replace('x="15" y="43" font-size="11"','x="4" y="45" font-size="14"').replace('>ESP','>RESP');
const TB=[
 [1928,38,`<svg width="38" height="40" viewBox="0 0 38 40"><defs><radialGradient id="o" cy=".9"><stop offset="0" stop-color="#3fd0f0"/><stop offset=".7" stop-color="#1c5c88"/><stop offset="1" stop-color="#12334c"/></radialGradient></defs><circle cx="19" cy="20" r="18" fill="url(#o)" stroke="#0e2c44"/><ellipse cx="19" cy="11" rx="14" ry="8" fill="#fff" opacity=".3"/><path d="M11 12q4-2 8 0l-1 7q-4-2-8 0z" fill="#f0602c"/><path d="M20 13q4 2 8 0l-1 7q-4 2-8 0z" fill="#8cc43c"/><path d="M9 21q4-2 8 0l-1 7q-4-2-8 0z" fill="#3c9cec"/><path d="M19 21q4 2 8 0l-1 7q-4 2-8 0z" fill="#fcc81c"/></svg>`],
 [1993,34,S(0,0,34,36,`<path d="M29 22H12q1 5 6 5 4 0 6-2l5 3q-4 5-11 5-12-1-13-13 1-12 13-13 12 1 11 15zM12 17h10q-1-5-5-5t-5 5z" fill="#3fb0ee" fill-rule="evenodd"/><path d="M5 33Q-2 28 8 15T30 2q4 1 2 8" fill="none" stroke="#f5c52c" stroke-width="2.800"/>`)],
 [2055,34,S(0,0,34,36,`<rect x="8" y="6" width="22" height="26" fill="#b8dcf0" stroke="#5a9cc4"/><rect x="3" y="4" width="22" height="26" fill="#c8e4f4" stroke="#5a9cc4"/><ellipse cx="14" cy="18" rx="9" ry="11" fill="#f07818"/><path d="M11 11l8 7-8 7z" fill="#fff"/>`)],
 [2117,34,S(0,0,34,36,`<ellipse cx="13" cy="12" rx="11" ry="10" fill="#fff" stroke="#d03030" stroke-width="2"/><path d="M9 8l14 16M20 6l-7 20" stroke="#888" stroke-width="2"/><circle cx="15" cy="28" r="4" fill="none" stroke="#2f80c8" stroke-width="3"/><circle cx="26" cy="27" r="4" fill="none" stroke="#2f80c8" stroke-width="3"/>`)],
 [2178,34,S(0,0,34,36,`<path d="M10 3h20l-5 26H4z" fill="#8cc4cc" stroke="#558"/><path d="M30 4l2 26-7-1z" fill="#c8a870"/><path d="M11 3h19" stroke="#ddd" stroke-width="3" stroke-dasharray="1 1"/>`)],
 [2227,59,S(0,0,34,36,`<path d="M1 6l3-3h10l3 3h14v24H1z" fill="#f5df88" stroke="#c09a40"/><path d="M4 4h6M14 7h6M22 9h6" stroke="#3a8f3a" stroke-width="2"/><path d="M7 34V22h19v12h-5v-6h-9v6z" fill="#7cc0e8" stroke="#4890c0"/>`),'b'],
 [2289,59,S(0,0,34,36,`<path d="M18 5h13v26H18z" fill="#fff" stroke="#2a579a"/><path d="M20 10h9M20 14h9M20 18h9M20 22h9M20 26h9" stroke="#2a579a" stroke-width="1.500"/><path d="M2 5l18-4v34L2 31z" fill="#2a579a"/><text x="4" y="23" font-size="14" font-weight="700" fill="#fff" font-family="Liberation Sans" textLength="13" lengthAdjust="spacingAndGlyphs">W</text>`),'b'],
 [2351,59,sc('chrome'),'b'],
 [2426,34,S(0,0,34,36,`<path d="M9 2h18l6 6v26H9z" fill="#f4f8ff" stroke="#3a68b0"/><path d="M12 9h14M12 13h18M12 25h18M12 29h14" stroke="#5a88d0" stroke-width="2"/><path d="M9 16h23v5H9z" fill="#f5c030"/><path d="M1 13h8V8l9 9-9 9v-5H1z" fill="#f08040" stroke="#a05020"/>`)],
 [2488,34,sc('dat',33)],[2538,58,sc('mxt',33),'b on'],
 [2600,58,S(0,0,34,36,`<path d="M4 20q2-14 16-14 12 2 8 10-4 2-2 6 0 10-12 10-11-2-10-12z" fill="#dcebf5" stroke="#7a9cb8"/><circle cx="10" cy="18" r="2.500" fill="#d04040"/><circle cx="16" cy="12" r="2.500" fill="#48a048"/><circle cx="12" cy="26" r="2.500" fill="#4880d0"/><path d="M30 4l-9 28" stroke="#d88a3c" stroke-width="3"/><path d="M27 1l6 1-2 8-4-2z" fill="#a86c3a"/>`),'b']];
define('task-bar', `:host{display:flex;height:40px;width:1920px;border-top:1px solid #46505e;box-shadow:inset 0 1px #e4eef8;background:linear-gradient(90deg,#7d93ad 0,#8ea5bf 70px,#b2cce6 150px,#a6c2e0 500px,#b2cfec 900px,#a8c6e2 1100px,#b4d2ee 1480px,#8fa5bd 1520px,#8499b2 100%);align-items:center;color:#fff;font-size:12px}
 .b{height:39px;border:1px solid #3c4a5c;border-radius:3px;background:linear-gradient(135deg,#dbe8f5,#b7cfe8);box-shadow:inset 0 0 0 1px #dce9f6}.c{justify-content:center}.on{background:linear-gradient(135deg,#fafcfe,#d8e8f6)}
 .tr{font-size:12px;text-align:center}.k{font:700 8px/11px "Liberation Sans"}`, () => {
 let c=1920, h=''; TB.forEach(([x,w,s,k=''])=>{h+=`<div class="row c ${k}" style="margin-left:${x-c}px;width:${w}px">${s}</div>`;c=x+w;});
 return h+R(2658,39,[
 [3453,17,S(0,0,17,18,'<rect x="1" y="1" width="15" height="16" rx="2" fill="#e84840" stroke="#fff"/><circle cx="8" cy="9" r="5.500" fill="none" stroke="#fff"/><path d="M5 8l3 4 6-8" fill="none" stroke="#fff" stroke-width="2"/>')],[3480,9,T(9,'A','font-size:18px;line-height:24px')],[3493,17,T(17,'般','font-size:17px;line-height:24px')],
 [3513,17,S(0,0,17,18,'<path d="M2 9h13l-2 8H4z" fill="#f4cf60"/><path d="M2 3l9 7" stroke="#c43030" stroke-width="3"/><circle cx="11" cy="5" r="4" fill="#90c4f0" stroke="#2458a8"/>')],[3533,17,S(0,0,17,18,'<rect x="1" y="2" width="10" height="12" fill="#eef"/><circle cx="10" cy="8" r="5" fill="#b0dcf8" stroke="#2468b0" stroke-width="2"/><path d="M7 12l-4 5" stroke="#2468b0" stroke-width="2"/>')],
 [3552,18,S(0,0,18,18,'<path d="M1 8l7-4 9 3v7l-8 4-8-4z" fill="#f0b040" stroke="#b87820"/><path d="M6 6l9-4" stroke="#e8d090" stroke-width="3"/>')],[3575,16,S(0,0,16,18,'<circle cx="8" cy="9" r="7.500" fill="#0c1c98" stroke="#ccd"/><text x="4.500" y="13.500" font-size="12" font-weight="700" fill="#fff" font-family="Liberation Sans">?</text>')],
 [3598,21,`<div class="k">${T(20,'CAPS')}<br>${T(20,'KANA')}</div>`],[3624,10,S(0,0,10,22,'<path d="M3.500 2.500h5v4h-5zM1.500 4.500h5v4h-5z" fill="none" stroke="#fff"/><path d="M2 16h6l-3 4z" fill="#fff"/>')],[3642,10,S(0,0,10,8,'<path d="M1 6h8L5 1z" fill="#fff"/>')],
 [3664,16,S(0,0,16,20,'<path d="M1.500 1v18M2 3q4-1 6 1t7 0v8q-5 2-7 0t-6 0z" stroke="#fff" fill="#fff"/>')],[3688,18,S(0,0,18,20,'<path d="M1 7h3l5-5v16l-5-5H1z" fill="#e8eef5" stroke="#555"/><circle cx="12" cy="14" r="5" fill="#d83020"/><path d="M10 12l4 4M14 12l-4 4" stroke="#fff" stroke-width="1.500"/>')],[3712,17,S(0,0,17,20,'<path d="M5 5h11v9H5zM8 17h6M11 14v3" fill="#6f8296" stroke="#fff" stroke-width="1.600"/><path d="M2 1v5h4V1M4 6v10" stroke="#fff" fill="none" stroke-width="1.500"/>')],
 [3747,66,`<div class="tr" style="width:66px;line-height:18px">${T(33,'13:59')}<br>${T(66,'2018/10/17')}</div>`],[3825,15,'','height:39px;border:1px solid #52647a;background:linear-gradient(90deg,#b4c4d4,#7088a4)']]); });

/* ---------- both monitors ---------- */
define('dual-desktop', `:host{display:flex;width:3840px;height:1080px}.d{position:relative;width:1920px;height:1080px;overflow:hidden;flex:none}.d>*{position:absolute}wall-paper,icon-grid{left:0;top:0}
 word-window{left:534px;top:70px}folder-window{left:500px;top:155px}back-window{left:691px;top:394px}resp-window{left:459px;top:203px}task-bar{left:0;top:1040px}`,
 `<div class="d"><wall-paper></wall-paper><word-window></word-window></div>
 <div class="d"><wall-paper plain></wall-paper><icon-grid></icon-grid><back-window></back-window><folder-window></folder-window><resp-window></resp-window><task-bar></task-bar></div>`);
</script>
</body>
</html>
